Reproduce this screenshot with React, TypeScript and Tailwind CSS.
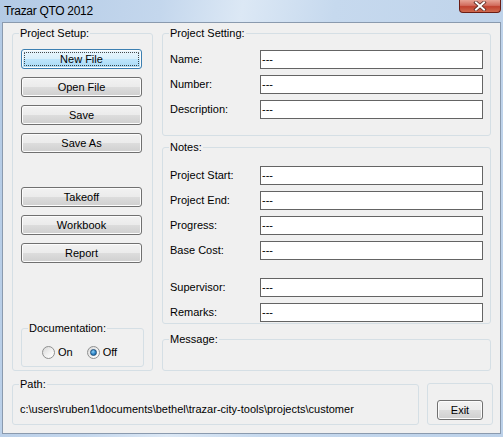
import React from 'react';

const btnBase =
  "relative h-[20px] rounded-[3px] border text-[11px] leading-[13px] text-black shadow-[inset_0_0_0_1px_#fcfcfc] flex items-center justify-center";
const btnNormal = `${btnBase} border-[#707070] bg-[linear-gradient(to_bottom,#f2f2f2_0%,#ebebeb_50%,#dddddd_50%,#cfcfcf_100%)]`;
const btnDefault = `${btnBase} border-[#3c7fb1] bg-[linear-gradient(to_bottom,#eaf6fd_0%,#d9f0fc_50%,#bee6fd_50%,#a7d9f5_100%)]`;

function WinButton({ label, focused, className = '' }: { label: string; focused?: boolean; className?: string }) {
  return (
    <button type="button" className={`${focused ? btnDefault : btnNormal} ${className}`}>
      {focused && <span className="absolute inset-[2px] border border-dotted border-black/70 rounded-[1px]" />}
      <span>{label}</span>
    </button>
  );
}

function GroupBox({
  title,
  className = '',
  children,
}: {
  title?: string;
  className?: string;
  children?: React.ReactNode;
}) {
  return (
    <fieldset className={`min-w-0 rounded-[3px] border border-[#d5dfe5] ${className}`}>
      {title && <legend className="ml-[6px] px-[1px] text-[11px] leading-[13px] text-black">{title}</legend>}
      {children}
    </fieldset>
  );
}

function Field({ label, className = '' }: { label: string; className?: string }) {
  return (
    <div className={`flex items-center ${className}`}>
      <span className="w-[90px] text-[11px] leading-[13px]">{label}</span>
      <div className="flex h-[19px] w-[223px] items-center border border-[#646464] bg-white pl-[1px] text-[11px] leading-[13px]">
        ---
      </div>
    </div>
  );
}

function Radio({ label, checked }: { label: string; checked?: boolean }) {
  return (
    <label className="flex items-center">
      <span className="flex h-[13px] w-[13px] items-center justify-center rounded-full border border-[#8e8f8f] bg-[linear-gradient(135deg,#d8d8d8_0%,#f4f4f4_60%,#ffffff_100%)]">
        {checked && (
          <span className="h-[7px] w-[7px] rounded-full border border-[#1f4f7a] bg-[radial-gradient(circle_at_40%_35%,#8fd0f5_0%,#2c84c8_55%,#145a92_100%)]" />
        )}
      </span>
      <span className="ml-[3px] text-[11px] leading-[13px]">{label}</span>
    </label>
  );
}

export default function App() {
  return (
    <div className="flex h-[437px] w-[503px] flex-col bg-[linear-gradient(100deg,#b3cae5_0%,#c4d7ed_28%,#dce8f5_42%,#c6d9ee_58%,#bcd1e9_100%)] font-['Liberation_Sans',Arial,sans-serif] text-black">
      {/* title bar */}
      <div className="flex h-[22px] items-start">
        <span className="ml-[4px] mt-[4px] text-[12px] leading-[14px] tracking-[-0.3px] text-black">Trazar QTO 2012</span>
        <button
          type="button"
          className="ml-auto mr-[2px] flex h-[13px] w-[42px] items-center justify-center rounded-b-[4px] border border-t-0 border-[#6b1d14] bg-[linear-gradient(to_bottom,#e7a496_0%,#d26d5e_45%,#c0412f_55%,#cf6a4f_100%)]"
          aria-label="Close"
        >
          <svg width="14" height="10" viewBox="0 0 14 10">
            <path d="M3 1.5 L11 8.5 M11 1.5 L3 8.5" stroke="#5a2a24" strokeWidth="3.6" strokeLinecap="square" />
            <path d="M3 1.5 L11 8.5 M11 1.5 L3 8.5" stroke="#ffffff" strokeWidth="2" strokeLinecap="square" />
          </svg>
        </button>
      </div>

      {/* client area */}
      <div className="mx-[2px] h-[412px] border border-[#8a9aae] bg-[#f0f0f0] pl-[9px] pt-[4px]">
        <div className="flex gap-[9px]">
          {/* left column */}
          <GroupBox title="Project Setup:" className="h-[344px] w-[141px]">
            <div className="flex h-[331px] flex-col pl-[8px]">
              <WinButton label="New File" focused className="mt-[9px] w-[121px]" />
              <WinButton label="Open File" className="mt-[8px] w-[121px]" />
              <WinButton label="Save" className="mt-[8px] w-[121px]" />
              <WinButton label="Save As" className="mt-[8px] w-[121px]" />
              <WinButton label="Takeoff" className="mt-[34px] w-[121px]" />
              <WinButton label="Workbook" className="mt-[8px] w-[121px]" />
              <WinButton label="Report" className="mt-[8px] w-[121px]" />
              <GroupBox title="Documentation:" className="mb-[4px] mt-auto h-[45px] w-[123px]">
                <div className="mt-[11px] flex items-center gap-[14px] pl-[20px]">
                  <Radio label="On" />
                  <Radio label="Off" checked />
                </div>
              </GroupBox>
            </div>
          </GroupBox>

          {/* right column */}
          <div className="flex w-[329px] flex-col">
            <GroupBox title="Project Setting:" className="h-[109px]">
              <div className="flex flex-col gap-[6px] pl-[7px] pt-[10px]">
                <Field label="Name:" />
                <Field label="Number:" />
                <Field label="Description:" />
              </div>
            </GroupBox>
            <GroupBox title="Notes:" className="mt-[5px] h-[183px]">
              <div className="flex flex-col gap-[6px] pl-[7px] pt-[12px]">
                <Field label="Project Start:" />
                <Field label="Project End:" />
                <Field label="Progress:" />
                <Field label="Base Cost:" />
                <Field label="Supervisor:" className="mt-[12px]" />
                <Field label="Remarks:" />
              </div>
            </GroupBox>
            <GroupBox title="Message:" className="mt-[9px] h-[38px]" />
          </div>
        </div>

        {/* bottom row */}
        <div className="mt-[7px] flex items-start gap-[8px]">
          <GroupBox title="Path:" className="h-[47px] w-[407px]">
            <div className="mt-[12px] pl-[7px] text-[11px] leading-[13px]">
              c:\users\ruben1\documents\bethel\trazar-city-tools\projects\customer
            </div>
          </GroupBox>
          <GroupBox className="mt-[5px] h-[42px] w-[66px]">
            <div className="pl-[9px] pt-[16px]">
              <WinButton label="Exit" className="w-[46px]" />
            </div>
          </GroupBox>
        </div>
      </div>
    </div>
  );
}
